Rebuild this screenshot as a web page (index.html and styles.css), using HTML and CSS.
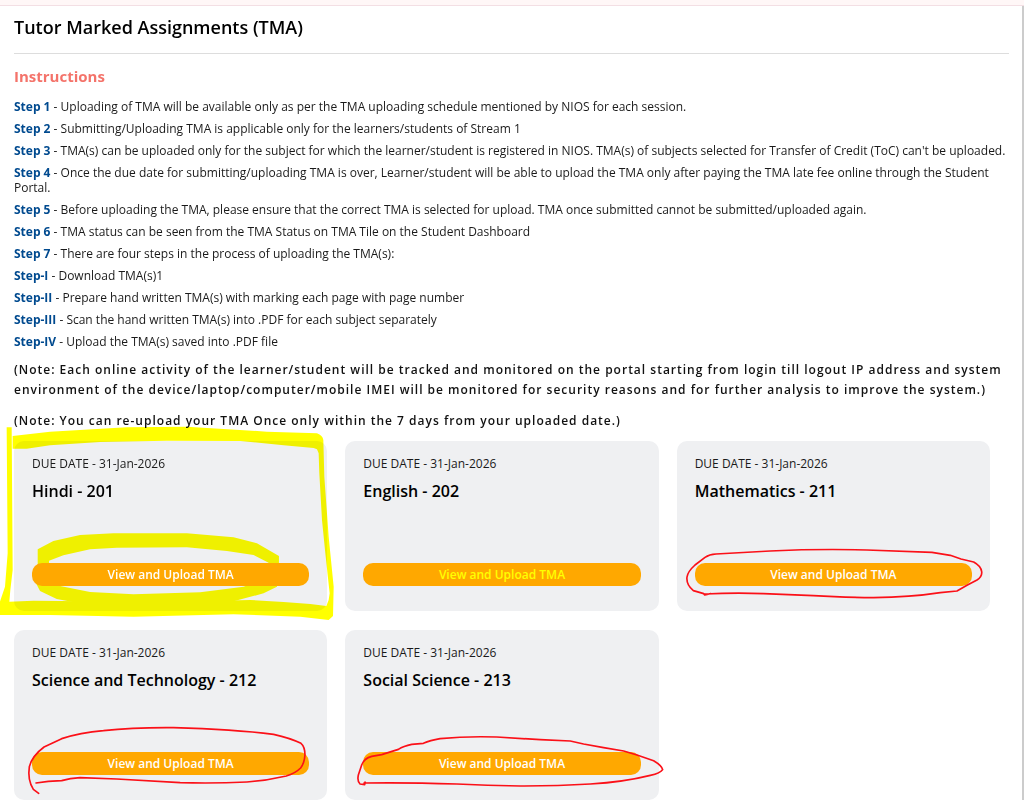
FILE: index.html
```
<!DOCTYPE html>
<html lang="en">
<head>
    <meta charset="UTF-8">
    <meta name="viewport" content="width=device-width, initial-scale=1.0">
    <title>Tutor Marked Assignments (TMA)</title>
    <link rel="stylesheet" href="styles.css">
</head>
<body>
    <div class="topbar"></div>
    <main class="panel">
        <h1>Tutor Marked Assignments (TMA)</h1>
        <h2>Instructions</h2>
        <div class="steps">
            <p><b>Step 1</b> - Uploading of TMA will be available only as per the TMA uploading schedule mentioned by NIOS for each session.</p>
            <p><b>Step 2</b> - Submitting/Uploading TMA is applicable only for the learners/students of Stream 1</p>
            <p><b>Step 3</b> - TMA(s) can be uploaded only for the subject for which the learner/student is registered in NIOS. TMA(s) of subjects selected for Transfer of Credit (ToC) can't be uploaded.</p>
            <p><b>Step 4</b> - Once the due date for submitting/uploading TMA is over, Learner/student will be able to upload the TMA only after paying the TMA late fee online through the Student Portal.</p>
            <p><b>Step 5</b> - Before uploading the TMA, please ensure that the correct TMA is selected for upload. TMA once submitted cannot be submitted/uploaded again.</p>
            <p><b>Step 6</b> - TMA status can be seen from the TMA Status on TMA Tile on the Student Dashboard</p>
            <p><b>Step 7</b> - There are four steps in the process of uploading the TMA(s):</p>
            <p><b>Step-I</b> - Download TMA(s)1</p>
            <p><b>Step-II</b> - Prepare hand written TMA(s) with marking each page with page number</p>
            <p><b>Step-III</b> - Scan the hand written TMA(s) into .PDF for each subject separately</p>
            <p><b>Step-IV</b> - Upload the TMA(s) saved into .PDF file</p>
        </div>
        <p class="note">(Note: Each online activity of the learner/student will be tracked and monitored on the portal starting from login till logout IP address and system environment of the device/laptop/computer/mobile IMEI will be monitored for security reasons and for further analysis to improve the system.)</p>
        <p class="note">(Note: You can re-upload your TMA Once only within the 7 days from your uploaded date.)</p>

        <div class="cards">
            <div class="card">
                <p class="due">DUE DATE - 31-Jan-2026</p>
                <h3>Hindi - 201</h3>
                <button type="button">View and Upload TMA</button>
                <!-- highlighter -->
                <svg class="mark highlight" viewBox="42 63 939 510" preserveAspectRatio="none" aria-hidden="true">
                    <path d="M20 22H35L38 450L31 510L28 545L100 542L500 546L750 540L850 546L930 552L978 558L985 540L988 520L975 400L965 300L957 160L955 100L950 88L940 84L850 76L720 63L500 62L300 66L150 76L80 86H38V48L150 35L380 22L560 20L800 35L950 40Q967 46 969 60L972 170L985 350L1000 500L998 588L985 600L900 590L700 583L400 590L150 585H0V545L15 500L23 400Z"/>
                    <path fill-rule="evenodd" d="M113 388L160 363L240 345L340 340H560L700 352L770 370L836 408V440L830 500L790 520L700 544L520 555L250 552L170 537L120 513L108 490L113 440ZM147 440V422L190 406L270 388L350 383L560 382L680 393L760 405L805 428L808 440V470L730 500L600 517L400 523L270 516L180 498L147 470Z"/>
                </svg>
            </div>
            <div class="card">
                <p class="due">DUE DATE - 31-Jan-2026</p>
                <h3>English - 202</h3>
                <button type="button" class="active">View and Upload TMA</button>
            </div>
            <div class="card">
                <p class="due">DUE DATE - 31-Jan-2026</p>
                <h3>Mathematics - 211</h3>
                <button type="button">View and Upload TMA</button>
                <svg class="mark pen" viewBox="21 33 939 510" preserveAspectRatio="none" aria-hidden="true">
                    <path d="M122 491L104 495L101 491L70 482Q48 464 51 441Q53 425 75 405L105 382Q118 373 138 372L300 363Q450 356 590 360L785 367L840 376L872 387L910 396Q932 408 934 425Q936 440 920 450L890 466L860 483L810 488Q720 502 610 503Q510 502 430 497L280 491Q200 487 104 492"/>
                </svg>
            </div>
            <div class="card">
                <p class="due">DUE DATE - 31-Jan-2026</p>
                <h3>Science and Technology - 212</h3>
                <button type="button">View and Upload TMA</button>
                <svg class="mark pen" viewBox="42 30 939 510" preserveAspectRatio="none" aria-hidden="true">
                    <path d="M116 520L100 508Q82 480 88 440Q96 408 132 381L185 356Q240 338 310 332Q400 322 520 323Q700 328 820 343Q870 354 902 370Q914 380 914 405Q912 430 901 444Q885 460 858 468Q800 482 740 486Q640 491 540 488L350 477L240 473Q210 474 185 482L145 484L108 489"/>
                </svg>
            </div>
            <div class="card">
                <p class="due">DUE DATE - 31-Jan-2026</p>
                <h3>Social Science - 213</h3>
                <button type="button">View and Upload TMA</button>
                <svg class="mark pen" viewBox="15 30 939 510" preserveAspectRatio="none" aria-hidden="true">
                    <path d="M75 486L74 494L60 492Q51 484 55 465L65 435Q72 415 95 409L125 404L175 388Q190 378 215 373L250 370Q270 361 300 356Q380 348 470 351L600 359L690 363L730 372L790 383L850 393L890 405L940 422Q965 437 967 449Q960 460 930 466Q850 486 750 492Q650 498 540 498Q440 496 350 492Q200 487 72 489"/>
                </svg>
            </div>
        </div>
    </main>
</body>
</html>
```
FILE: styles.css
```
* {
    box-sizing: border-box;
}
body {
    margin: 0;
    font-family: 'Open Sans', 'Noto Sans', sans-serif;
    background-color: #ffffff;
    color: #1a1a1a;
    overflow-x: hidden;
}
h1, h2, h3, p {
    margin: 0;
}
.topbar {
    height: 6px;
    background-color: #fff7f7;
    border-bottom: 1px solid #f3dfe4;
}
.panel {
    padding: 8px 13px 0 14px;
    border-right: 2px solid #cccccc;
}
h1 {
    padding-bottom: 13px;
    border-bottom: 1px solid #dddddd;
    font-size: 18px;
    font-weight: 600;
    line-height: 26px;
    color: #000000;
}
h2 {
    margin: 12px 0 13px;
    font-size: 15px;
    line-height: 20px;
    color: #f4736a;
}
.steps p {
    margin-bottom: 7px;
    font-size: 12px;
    line-height: 15px;
}
.steps b {
    color: #004a8f;
}
.note {
    margin: 11px 0 10px;
    font-size: 12px;
    font-weight: 600;
    line-height: 20px;
    letter-spacing: 1px;
    color: #111111;
}
.cards {
    display: grid;
    grid-template-columns: repeat(3, 1fr);
    gap: 19px 18px;
    padding-right: 19px;
}
.card {
    position: relative;
    display: flex;
    flex-direction: column;
    min-height: 170px;
    padding: 14px 18px 25px;
    border-radius: 10px;
    background-color: #eff0f2;
}
.due {
    font-size: 12px;
    line-height: 18px;
}
h3 {
    margin-top: 6px;
    font-size: 16px;
    font-weight: 600;
    line-height: 24px;
    color: #000000;
}
button {
    height: 23px;
    margin-top: auto;
    padding: 0;
    border: none;
    border-radius: 10px;
    background-color: #ffa800;
    color: #ffffff;
    font-family: inherit;
    font-size: 12px;
    font-weight: 600;
    line-height: 23px;
    cursor: pointer;
}
button:hover, button.active {
    color: #ffff00;
}
.mark {
    position: absolute;
    top: 0;
    left: 0;
    width: 100%;
    height: 100%;
    overflow: visible;
    pointer-events: none;
}
.highlight {
    fill: #ffff00;
    mix-blend-mode: multiply;
}
.pen {
    fill: none;
    stroke: #fb1018;
    stroke-width: 5;
    stroke-linejoin: round;
    stroke-linecap: round;
}
```
